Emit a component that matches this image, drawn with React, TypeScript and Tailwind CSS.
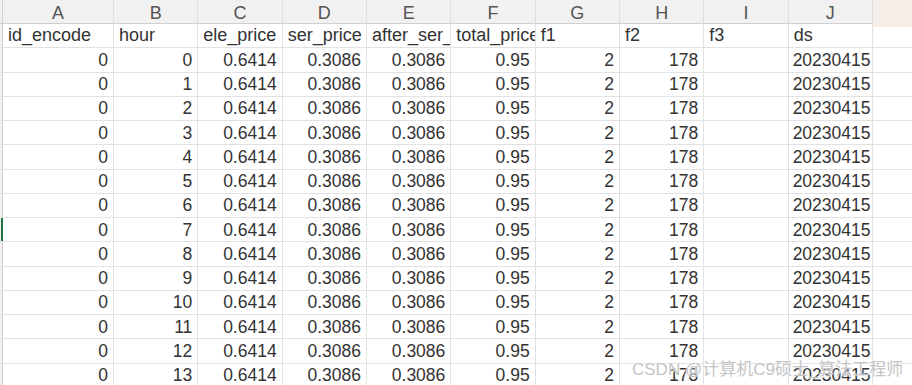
import React from "react";

const letters = ["A", "B", "C", "D", "E", "F", "G", "H", "I", "J"];
const heads = ["id_encode", "hour", "ele_price", "ser_price", "after_ser_price", "total_price", "f1", "f2", "f3", "ds"];
const cols = "grid-cols-[3px_111px_84.33px_84.33px_84.33px_84.33px_84.33px_84.33px_84.33px_84.33px_84.33px_1fr]";

export default function App() {
  const rows = Array.from({ length: 14 }, (_, i) => ["0", String(i), "0.6414", "0.3086", "0.3086", "0.95", "2", "178", "", "20230415"]);
  return (
    <div
      className="relative w-[912px] h-[385px] overflow-hidden bg-white text-[#333]"
      style={{ fontFamily: '"Liberation Sans", Arial, sans-serif' }}
    >
      <div className={`grid ${cols} h-[24px] bg-[#f1f1f1] border-b border-[#cfcfcf]`}>
        <div className="border-r border-[#cfcfcf]" />
        {letters.map((l) => (
          <div key={l} className="flex items-center justify-center border-r border-[#dedede] text-[18px] text-[#555]">
            {l}
          </div>
        ))}
        <div className="bg-[#f6efe9]" />
      </div>
      <div className={`grid ${cols} h-[24.25px] border-b border-[#e2e2e2]`}>
        <div className="bg-[#f1f1f1] border-r border-[#cfcfcf]" />
        {heads.map((h) => (
          <div key={h} className="flex items-center pl-[5px] border-r border-[#e2e2e2] text-[18px] overflow-hidden whitespace-nowrap">
            {h}
          </div>
        ))}
        <div />
      </div>
      {rows.map((r, ri) => (
        <div key={ri} className={`grid ${cols} h-[24.25px] border-b border-[#e2e2e2]`}>
          <div className={ri === 7 ? "bg-[#f1f1f1] border-r-2 border-[#217346]" : "bg-[#f1f1f1] border-r border-[#cfcfcf]"} />
          {r.map((v, ci) => (
            <div
              key={ci}
              className={
                ci === 9
                  ? "flex items-center pl-[4px] border-r border-[#e2e2e2] text-[17.5px] overflow-hidden whitespace-nowrap"
                  : "flex items-center justify-end pr-[5px] border-r border-[#e2e2e2] text-[17.5px] overflow-hidden whitespace-nowrap"
              }
            >
              {v}
            </div>
          ))}
          <div />
        </div>
      ))}
      <div
        className="absolute left-[632px] top-[357px] text-[17px] text-[#c4c4c4] whitespace-nowrap"
        style={{
          fontFamily: '"Liberation Sans", "Noto Sans CJK SC", sans-serif',
          textShadow: "0 0 1px #fff, 0 0 2px #fff",
        }}
      >
        CSDN @计算机C9硕士_算法工程师
      </div>
    </div>
  );
}
